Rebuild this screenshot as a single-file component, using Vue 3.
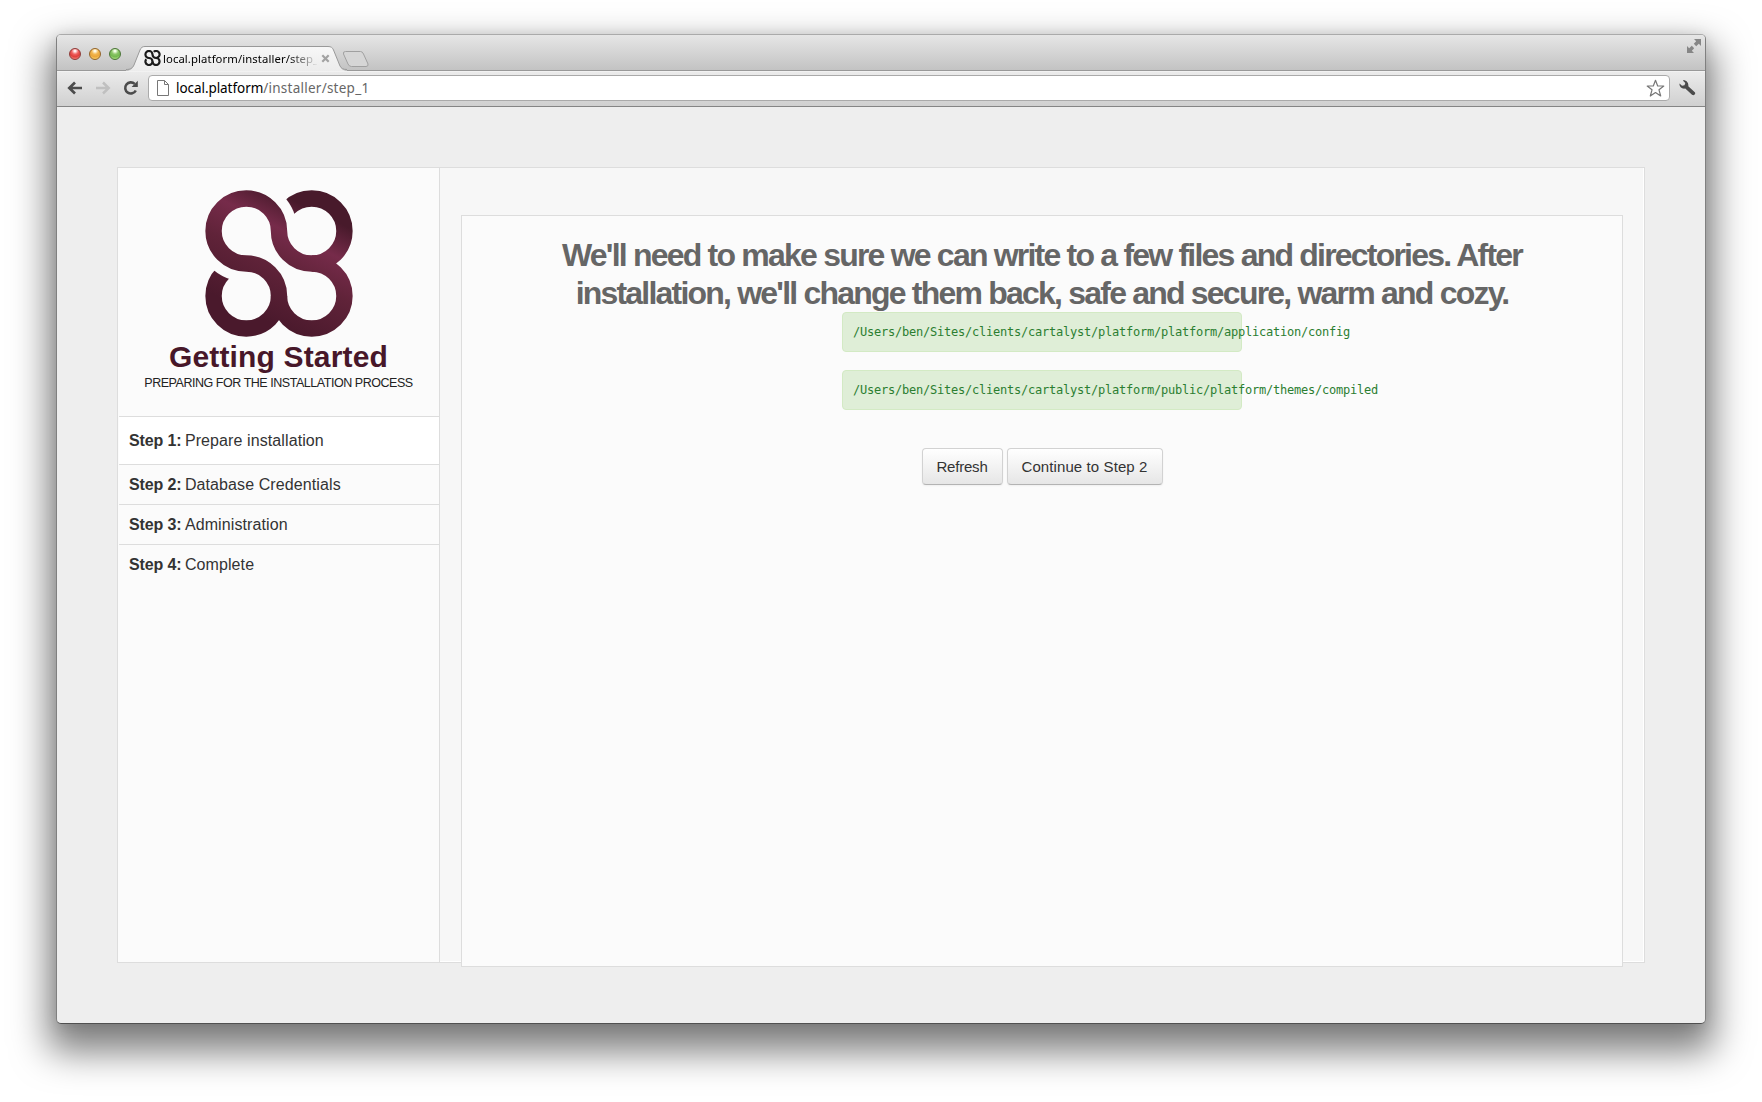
<script setup>
const steps = [
  { n: 1, label: 'Prepare installation', active: true },
  { n: 2, label: 'Database Credentials' },
  { n: 3, label: 'Administration' },
  { n: 4, label: 'Complete' },
]
const paths = [
  '/Users/ben/Sites/clients/cartalyst/platform/platform/application/config',
  '/Users/ben/Sites/clients/cartalyst/platform/public/platform/themes/compiled',
]
</script>

<template>
  <div class="desktop">
  <div class="window">
    <header class="titlebar">
      <div class="lights"><i class="red"></i><i class="amber"></i><i class="green"></i></div>
      <div class="tab">
        <svg class="tab-shape" width="222" height="25" viewBox="0 0 222 25">
          <defs><linearGradient id="tabfill" x1="0" y1="0" x2="0" y2="1"><stop offset="0" stop-color="#f7f7f7"/><stop offset="1" stop-color="#ececec"/></linearGradient></defs>
          <path d="M0 24.500C5 24.500 6.500 23 8 19L14 4C15 1.500 16.500 .5 19 .5H202C205 .5 206.500 1.500 207.500 4L214 20C215.500 23.500 217 24.500 221 24.500V25H0Z" fill="url(#tabfill)"/>
          <path d="M0 23.500C5 23.500 6.500 22 8 19L14 4C15 1.500 16.500 .5 19 .5H202C205 .5 206.500 1.500 207.500 4L214 20C215.500 22.500 217 23.500 221 23.500" fill="none" stroke="#999"/>
        </svg>
        <svg class="favicon" width="17" height="16" viewBox="0 0 147 147">
          <g fill="none" stroke="#1c1c1c" stroke-width="20">
            <path d="M84.500 16.500A32.500 32.500 0 1 1 106 73.500"/>
            <path d="M16.500 84.500A32.500 32.500 0 1 0 73.500 106"/>
            <path d="M73.500 106A32.500 32.500 0 0 0 41 73.500A32.500 32.500 0 1 1 73.500 41A32.500 32.500 0 0 0 106 73.500A32.500 32.500 0 1 1 73.500 106"/>
          </g>
        </svg>
        <span class="tab-title">local.platform/installer/step_</span>
        <svg class="close" width="9" height="9" viewBox="0 0 9 9"><path d="M1.300 1.300L7.700 7.700M7.700 1.300L1.300 7.700" stroke="#a2a2a2" stroke-width="2.200"/></svg>
      </div>
      <svg class="new-tab" width="28" height="18" viewBox="0 0 28 18"><path d="M3.500 1.500H18.500Q20.500 1.500 21.500 4L26 14Q26.500 16.500 24 16.500H9.500Q7 16.500 6 14L1.500 4Q.8 1.500 3.500 1.500Z" fill="#d6d6d6" stroke="#a0a0a0"/></svg>
      <svg class="fullscreen" width="14" height="14" viewBox="0 0 14 14" fill="#868686"><path d="M7 0H14V7L11.800 4.800L9.200 7.200L6.800 4.800L9.200 2.200ZM0 7L2.200 9.200L4.800 6.800L7.200 9.200L4.800 11.800L7 14H0Z"/></svg>
    </header>

    <div class="toolbar">
      <svg class="back" width="16" height="14" viewBox="0 0 16 14"><path d="M15 7H3M8 1.500L2.300 7L8 12.500" fill="none" stroke="#4b4b4b" stroke-width="2.700"/></svg>
      <svg class="forward" width="16" height="14" viewBox="0 0 16 14"><path d="M1 7H13M8 1.500L13.700 7L8 12.500" fill="none" stroke="#c0c0c0" stroke-width="2.500"/></svg>
      <svg class="reload" width="16" height="16" viewBox="0 0 16 16"><path d="M12.800 10.500A5.600 5.600 0 1 1 11.700 3.900" fill="none" stroke="#4b4b4b" stroke-width="2.600"/><path d="M14.800 .8V7H8.600Z" fill="#4b4b4b"/></svg>
      <div class="omnibox">
        <svg width="12" height="16" viewBox="0 0 12 16"><path d="M.5 .5H7.500L11.500 4.500V15.500H.5ZM7.500 .5V4.500H11.500" fill="#fff" stroke="#777"/></svg>
        <span class="url"><b>local.platform</b><span>/installer/step_1</span></span>
        <svg class="star" width="19" height="19" viewBox="0 0 19 19"><path d="M9.500 1.300L11.700 7H17.800L13 10.800L14.700 17L9.500 13.500L4.300 17L6 10.800L1.200 7H7.300Z" fill="#fff" stroke="#777" stroke-width="1.200" stroke-linejoin="round"/></svg>
      </div>
      <svg class="wrench" width="18" height="16" viewBox="0 0 18 16"><path d="M3.800 .4L6.300 3L5.500 5.200L3 5.700L.5 3.500C.2 6.500 2.500 9.300 6.300 8.600L13 14.800C14.800 16.200 17.200 14 15.800 12.200L9.300 6.200C9.800 2.500 7 -.3 3.800 .4Z" fill="#4b4b4b"/></svg>
    </div>

    <main class="page">
      <div class="panel">
        <aside>
          <div class="brand">
            <svg class="logo" width="148" height="147" viewBox="0 0 147 147" preserveAspectRatio="none">
              <defs>
                <linearGradient id="plum" gradientUnits="userSpaceOnUse" x1="13.400" y1="-26.800" x2="-40.200" y2="80.500">
                  <stop offset="0" stop-color="#481a2b"/><stop offset=".26" stop-color="#762b4a"/><stop offset=".55" stop-color="#602339"/><stop offset="1" stop-color="#4a192c"/>
                </linearGradient>
              </defs>
              <g fill="none" stroke="url(#plum)" stroke-width="16.300">
                <path d="M73.500 41A32.500 32.500 0 1 1 106 73.500"/>
                <path d="M41 73.500A32.500 32.500 0 1 0 73.500 106"/>
                <circle cx="41" cy="41" r="50.800" fill="#fbfbfb" stroke="none"/>
                <path d="M73.500 106A32.500 32.500 0 0 0 41 73.500A32.500 32.500 0 1 1 73.500 41A32.500 32.500 0 0 0 106 73.500A32.500 32.500 0 1 1 73.500 106"/>
              </g>
            </svg>
            <h2>Getting Started</h2>
            <p>PREPARING FOR THE INSTALLATION PROCESS</p>
          </div>
          <ul>
            <li v-for="s in steps" :key="s.n" :class="{ active: s.active }"><strong>Step {{ s.n }}:</strong><span>{{ s.label }}</span></li>
          </ul>
        </aside>
        <section class="content">
          <h1>We'll need to make sure we can write to a few files and directories. After<br>installation, we'll change them back, safe and secure, warm and cozy.</h1>
          <div v-for="p in paths" :key="p" class="alert"><code>{{ p }}</code></div>
          <div class="actions"><button class="refresh">Refresh</button><button class="next">Continue to Step 2</button></div>
        </section>
      </div>
    </main>
  </div>
  </div>
</template>

<style>
html, body { background: #fff; }
</style>

<style scoped>
* { box-sizing: border-box; }
svg { display: block; flex: none; }
.desktop { width: 1762px; height: 1102px; padding: 34px 56px; overflow: hidden; background: #fff; }
.window {
  width: 1650px; height: 990px;
  border: 1px solid; border-color: #aaa #808080 #505050; border-radius: 5px;
  box-shadow: 0 20px 36px 8px rgba(0,0,0,.5), 0 2px 14px rgba(0,0,0,.1);
  background: #eee; overflow: hidden; font-family: "Liberation Sans", Arial, sans-serif; color: #333;
}
.titlebar { height: 36px; border-bottom: 1px solid #999; background: linear-gradient(#e6e6e6, #c3c3c3); display: flex; }
.lights { display: flex; gap: 8px; padding: 13px 0 0 12px; }
.lights i { width: 12px; height: 12px; border-radius: 50%; border: 1px solid; }
.red { background: radial-gradient(circle at 50% 20%, #fff0f0 0 8%, #f0605f 35%, #e0403c 60%, #ff9a90); border-color: #8f3b38 !important; }
.amber { background: radial-gradient(circle at 50% 20%, #fffbe8 0 8%, #f2b750 35%, #eba63a 60%, #ffe680); border-color: #946428 !important; }
.green { background: radial-gradient(circle at 50% 20%, #f4ffe8 0 8%, #8cc668 35%, #74b950 60%, #c6f298); border-color: #4a7536 !important; }
.tab { position: relative; width: 222px; height: 25px; margin: 11px 0 0 5px; display: flex; padding-left: 18px; }
.tab-shape { position: absolute; left: 0; top: 0; }
.favicon { position: relative; margin-top: 4px; }
.tab-title { position: relative; width: 154px; margin-left: 2px; white-space: nowrap; font: 11.3px/25px "Noto Sans", sans-serif; letter-spacing: .09px; color: #000; -webkit-mask-image: linear-gradient(90deg, #000 125px, transparent 156px); mask-image: linear-gradient(90deg, #000 125px, transparent 156px); }
.close { position: relative; margin: 8px 0 0 4px; }
.new-tab { margin: 15px 0 0 -6px; }
.fullscreen { margin: 4px 4px 0 auto; }
.toolbar { height: 36px; border-bottom: 1px solid #858585; background: linear-gradient(#ececec, #d0d0d0); display: flex; align-items: center; padding: 0 8px 1px 10px; box-shadow: inset 0 1px #f2f2f2; }
.forward { margin-left: 12px; }
.reload { margin-left: 12px; }
.omnibox { flex: 1; height: 26px; margin: 0 9px; border: 1px solid #aaa; border-radius: 4px; background: #fff; display: flex; align-items: center; padding: 0 4px 0 8px; }
.url { font: 13.5px/24px "Noto Sans", sans-serif; letter-spacing: .25px; margin-left: 7px; color: #666; white-space: nowrap; }
.url b { color: #000; font-weight: 400; letter-spacing: -.06px; }
.star { margin-left: auto; }
.page { padding: 60px; height: 916px; }
.panel { height: 796px; border: 1px solid #ddd; background: #f7f7f7; display: flex; box-shadow: inset -1px -1px #fff; }
aside { width: 322px; border-right: 1px solid #ddd; background: #fbfbfb; flex: none; }
.brand { height: 248px; padding-top: 22px; display: flex; flex-direction: column; align-items: center; }
h2 { margin: 5px 0 0; font: bold 30px/30px "Liberation Sans", Arial, sans-serif; letter-spacing: .16px; color: #471729; white-space: nowrap; }
p { margin: 3px 0 0; font-size: 12.5px; line-height: 16px; letter-spacing: -.46px; white-space: nowrap; color: #222; }
ul { list-style: none; margin: 0; padding: 0 0 0 1px; }
li { height: 40px; border-top: 1px solid #ddd; padding-left: 10px; display: flex; align-items: center; font-size: 16px; white-space: nowrap; gap: 3.5px; letter-spacing: .1px; }
li strong { letter-spacing: -.14px; }
li.active { height: 48px; background: #fff; }
.content { width: 1162px; height: 752px; margin: 47px 0 0 21px; border: 1px solid #ddd; background: #fbfbfb; flex: none; display: flex; flex-direction: column; align-items: center; }
h1 { margin: 20px 0 0; font: bold 32px/38px "Liberation Sans", Arial, sans-serif; color: #666; text-align: center; white-space: nowrap; letter-spacing: -1.79px; }
.alert { width: 400px; height: 40px; margin-bottom: 18px; border: 1px solid #d3eac4; border-radius: 4px; background: #dfeed7; padding-left: 10px; white-space: nowrap; }
code { font: 12px/38px "DejaVu Sans Mono", monospace; letter-spacing: -.224px; color: #2b7e31; }
.actions { display: flex; gap: 4px; margin-top: 20px; }
button { height: 37px; padding: 0; border: 1px solid #d2d2d2; border-bottom-color: #b3b3b3; border-radius: 4px; background: linear-gradient(#fff, #e6e6e6); color: #333; font: 15px "Liberation Sans", Arial, sans-serif; box-shadow: 0 1px 2px rgba(0,0,0,.05); white-space: nowrap; }
.refresh { width: 81px; letter-spacing: -.2px; }
.next { width: 156px; letter-spacing: .1px; }
</style>
